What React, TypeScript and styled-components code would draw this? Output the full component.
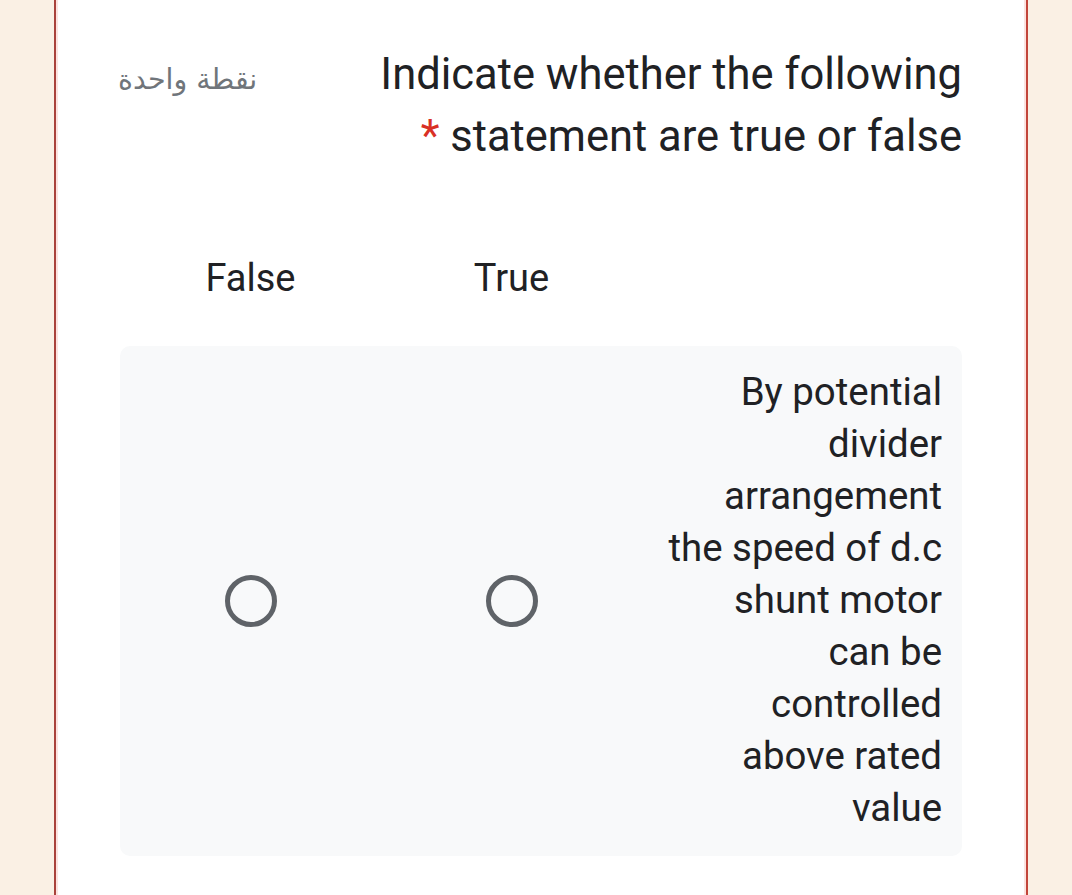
import React from "react";
import styled, { createGlobalStyle } from "styled-components";

const Global = createGlobalStyle`
  html, body { margin: 0; padding: 0; background: #faf0e4; }
  body { font-family: Roboto, "DejaVu Sans", sans-serif; }
`;

const Page = styled.div`
  display: flex;
  min-height: 895px;
  padding-left: 54px;
`;

const Card = styled.div`
  width: 974px;
  min-height: 895px;
  background: #ffffff;
  border-left: 2px solid #a9423b;
  border-right: 2px solid #c2453a;
  box-shadow: inset 2px 0 0 #fbe3e0, inset -2px 0 0 #fbe3e0;
  padding: 44px 64px 0 62px;
  box-sizing: border-box;
  direction: rtl;
`;

const Header = styled.div`
  display: flex;
  justify-content: space-between;
  align-items: flex-start;
`;

const Title = styled.div`
  width: 640px;
  font-family: Roboto, sans-serif;
  font-size: 43.5px;
  line-height: 62px;
  color: #202124;
  text-align: right;
`;

const Asterisk = styled.span`
  color: #d93025;
`;

const Points = styled.div`
  font-family: "DejaVu Sans", "Noto Sans", sans-serif;
  font-size: 28.5px;
  line-height: 40px;
  margin-top: 16px;
  color: #70757a;
`;

const Grid = styled.div`
  margin-top: 84px;
  display: grid;
  grid-template-columns: 320px 261px 261px;
`;

const HeadCell = styled.div`
  font-size: 38px;
  line-height: 52px;
  color: #202124;
  text-align: center;
  padding-bottom: 42px;
`;

const Row = styled.div`
  grid-column: 1 / -1;
  display: grid;
  grid-template-columns: 320px 261px 261px;
  align-items: center;
  background: #f8f9fa;
  border-radius: 10px;
`;

const RowLabel = styled.div`
  font-size: 38.4px;
  line-height: 52px;
  color: #202124;
  text-align: right;
  padding: 20px 20px 22px 10px;
`;

const RadioCell = styled.div`
  display: flex;
  justify-content: center;
  align-items: center;
`;

const Radio = styled.div`
  width: 52px;
  height: 52px;
  box-sizing: border-box;
  border: 5px solid #5f6368;
  border-radius: 50%;
`;

const labelLines = [
  "By potential",
  "divider",
  "arrangement",
  "the speed of d.c",
  "shunt motor",
  "can be",
  "controlled",
  "above rated",
  "value",
];

export default function App() {
  return (
    <>
      <Global />
      <Page>
        <Card>
          <Header>
            <Title>
              Indicate whether the following statement are true or false{" "}
              <Asterisk>*</Asterisk>
            </Title>
            <Points>نقطة واحدة</Points>
          </Header>
          <Grid>
            <HeadCell />
            <HeadCell>True</HeadCell>
            <HeadCell>False</HeadCell>
            <Row>
              <RowLabel>
                {labelLines.map((l, i) => (
                  <div key={i}>{l}</div>
                ))}
              </RowLabel>
              <RadioCell>
                <Radio />
              </RadioCell>
              <RadioCell>
                <Radio />
              </RadioCell>
            </Row>
          </Grid>
        </Card>
      </Page>
    </>
  );
}
